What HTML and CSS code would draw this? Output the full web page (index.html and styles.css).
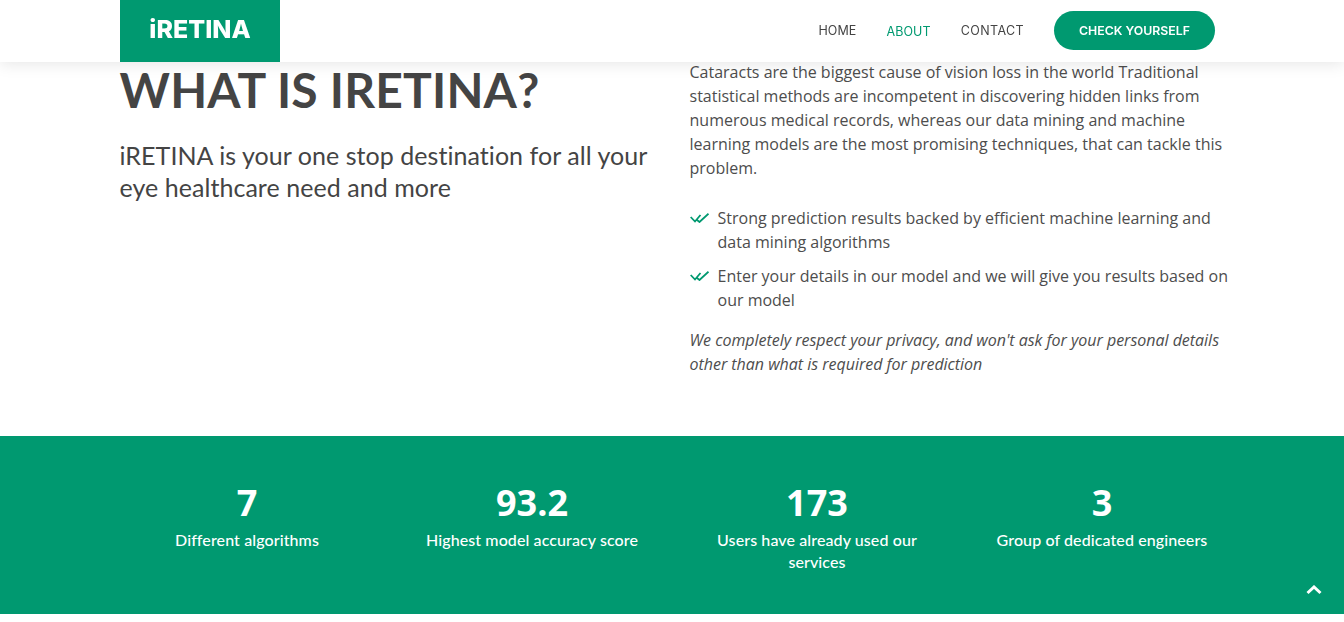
FILE: index.html
```html
<!DOCTYPE html>
<html lang="en">
<head>
    <meta charset="UTF-8">
    <title>iRETINA</title>
    <link rel="stylesheet" href="styles.css">
</head>
<body>
    <header id="header">
        <a class="logo" href="#">iRETINA</a>
        <nav class="nav">
            <a href="#">HOME</a>
            <a class="active" href="#">ABOUT</a>
            <a class="contact" href="#">CONTACT</a>
            <a class="btn" href="#">CHECK YOURSELF</a>
        </nav>
    </header>
    <section class="about">
        <div class="col">
            <h1>WHAT IS IRETINA?</h1>
            <h2>iRETINA is your one stop destination for all your eye healthcare need and more</h2>
        </div>
        <div class="col">
            <p>Cataracts are the biggest cause of vision loss in the world Traditional statistical methods are incompetent in discovering hidden links from numerous medical records, whereas our data mining and machine learning models are the most promising techniques, that can tackle this problem.</p>
            <ul class="checks">
                <li>
                    <svg class="check" viewBox="0 0 19 10"><path d="M0.7 4L5 8.5L10.5 2M7 7L9.5 9L18.5 0.7"/></svg>
                    <span>Strong prediction results backed by efficient machine learning and data mining algorithms</span>
                </li>
                <li>
                    <svg class="check" viewBox="0 0 19 10"><path d="M0.7 4L5 8.5L10.5 2M7 7L9.5 9L18.5 0.7"/></svg>
                    <span>Enter your details in our model and we will give you results based on our model</span>
                </li>
            </ul>
            <p class="note">We completely respect your privacy, and won't ask for your personal details other than what is required for prediction</p>
        </div>
    </section>
    <section class="stats">
        <div class="stat"><b>7</b><span>Different algorithms</span></div>
        <div class="stat"><b>93.2</b><span>Highest model accuracy score</span></div>
        <div class="stat"><b>173</b><span>Users have already used our services</span></div>
        <div class="stat"><b>3</b><span>Group of dedicated engineers</span></div>
    </section>
    <a class="top" href="#"><svg viewBox="0 0 16 10"><path d="M1.5 8L8 2L14.5 8"/></svg></a>
</body>
</html>
```

FILE: styles.css
```css
*{
    margin: 0;
    padding: 0;
    box-sizing: border-box;
}
html, body{
    height: 622px;
    overflow: hidden;
}
body{
    font-family: "Open Sans", sans-serif;
    color: #444;
    background: #fff;
}
a{
    text-decoration: none;
}
li{
    list-style: none;
}
#header{
    position: fixed;
    top: 0;
    left: 0;
    width: 100%;
    height: 62px;
    padding: 0 129px 0 120px;
    display: flex;
    justify-content: space-between;
    background: #fff;
    box-shadow: 0 2px 15px rgba(0,0,0,0.1);
    z-index: 10;
}
.logo{
    width: 160px;
    background: #009970;
    color: #fff;
    font-family: "Inter", sans-serif;
    font-size: 25px;
    font-weight: 800;
    line-height: 58px;
    text-align: center;
}
.nav{
    display: flex;
    align-items: center;
    padding-bottom: 2px;
    font-family: "Inter", sans-serif;
    font-size: 12.5px;
    letter-spacing: 0.1px;
}
.nav a{
    color: #444;
    margin-left: 30px;
}
.nav a.active{
    color: #009970;
    margin-top: 2px;
}
.nav a.contact{
    letter-spacing: 0.4px;
}
.nav a.btn{
    width: 161px;
    height: 39px;
    border-radius: 20px;
    background: #009970;
    color: #fff;
    font-size: 12.3px;
    font-weight: 600;
    letter-spacing: 0;
    line-height: 39px;
    text-align: center;
}
.about{
    width: 1140px;
    height: 436px;
    margin-left: 104.5px;
    padding-top: 60px;
    display: flex;
}
.col{
    width: 570px;
    padding: 0 15px;
    color: #4d4d4d;
}
h1{
    color: #444;
    font-family: "Lato", sans-serif;
    font-size: 48px;
    font-weight: 700;
    letter-spacing: 0.2px;
    line-height: 60px;
}
h2{
    margin-top: 19px;
    color: #444;
    font-family: "Lato", sans-serif;
    font-size: 25px;
    font-weight: 400;
    letter-spacing: 0.05px;
    line-height: 32px;
}
p{
    font-size: 16px;
    line-height: 24px;
}
.checks{
    margin-top: 26px;
}
.checks li{
    display: flex;
    margin-bottom: 10px;
    font-size: 16px;
    line-height: 24px;
}
.check{
    flex: none;
    width: 19px;
    height: 10px;
    margin: 7px 9px 0 0;
    fill: none;
    stroke: #009970;
    stroke-width: 1.8;
}
.note{
    margin-top: 16px;
    font-style: italic;
    letter-spacing: -0.02px;
}
.stats{
    width: 100%;
    height: 178px;
    padding: 41px 0 0 104.5px;
    display: flex;
    background: #009970;
    color: #fff;
}
.stat{
    width: 285px;
    padding: 0 30px;
    text-align: center;
}
.stat b{
    display: block;
    font-size: 36px;
    line-height: 52px;
}
.stat span{
    display: block;
    font-family: "Lato", sans-serif;
    font-size: 16px;
    font-weight: 500;
    letter-spacing: 0.1px;
    line-height: 22px;
}
.top{
    position: fixed;
    right: 22px;
    bottom: 27px;
    width: 16px;
    height: 10px;
}
.top svg{
    display: block;
    fill: none;
    stroke: #fff;
    stroke-width: 3;
}
```
